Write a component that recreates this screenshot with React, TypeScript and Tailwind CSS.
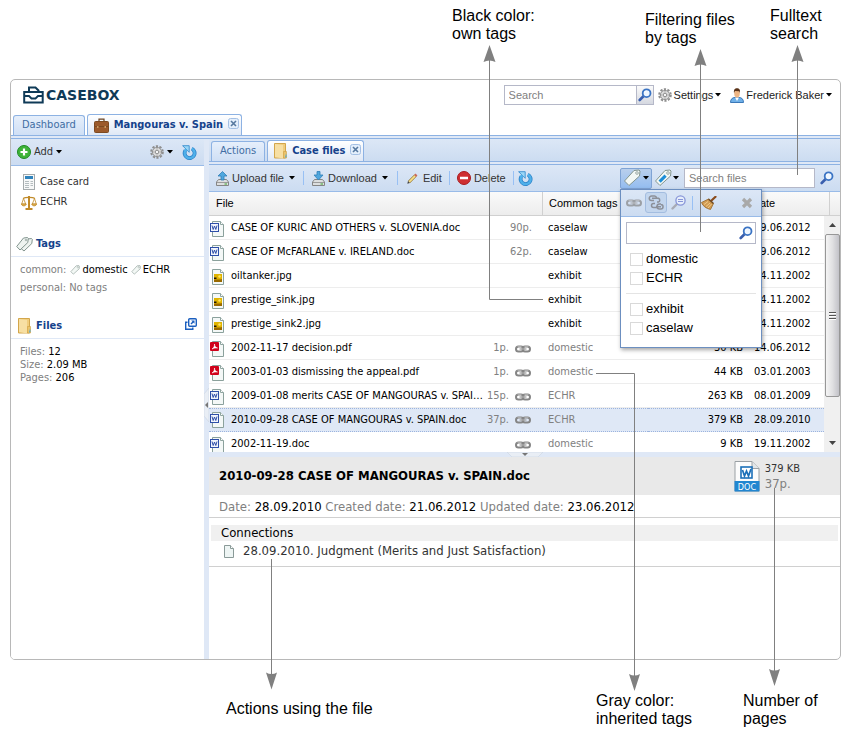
import type { ReactNode } from 'react';

const UI = "font-['DejaVu_Sans_Condensed','DejaVu_Sans',sans-serif]";
const SANS = "font-['Liberation_Sans',Arial,sans-serif]";

type IconProps = { className?: string };

function Caret() {
  return (
    <svg width="6" height="4" viewBox="0 0 6 4" className="shrink-0" aria-hidden="true">
      <path d="M0 0h6L3 3.500z" fill="#000" />
    </svg>
  );
}

function LogoMark() {
  return (
    <svg width="21" height="18" viewBox="0 0 21 18" fill="none" stroke="#0f3a57" aria-hidden="true">
      <path d="M6 5V1.500h6.500L15.500 4.500v1" strokeWidth="2" />
      <path d="M1.200 6h18.500v10.500H1.200z" strokeWidth="2" />
      <path d="M2 10h4l2.500 2.500h4L15 10h4" strokeWidth="1.800" />
    </svg>
  );
}

function Magnifier({ className = '' }: IconProps) {
  return (
    <svg width="14" height="14" viewBox="0 0 14 14" className={className} aria-hidden="true">
      <path d="M1.700 12l4-4" stroke="#3a5fae" strokeWidth="2.600" strokeLinecap="round" />
      <circle cx="8.600" cy="5.200" r="3.900" fill="#eef6ff" stroke="#3b74c4" strokeWidth="1.800" />
      <path d="M6.500 4.500a2.200 2.200 0 0 1 2-1.500" stroke="#fff" fill="none" />
    </svg>
  );
}

function Gear({ className = '' }: IconProps) {
  return (
    <svg width="14" height="14" viewBox="0 0 14 14" className={className} fill="none" aria-hidden="true">
      <circle cx="7" cy="7" r="5.800" stroke="#8f8f8f" strokeWidth="2" strokeDasharray="2.200 1.440" />
      <circle cx="7" cy="7" r="4.600" fill="#dcdcdc" stroke="#949494" />
      <circle cx="7" cy="7" r="1.800" fill="#f6f6f6" stroke="#8d8d8d" />
      <path d="M7 3v1.500M7 9.500V11M3 7h1.500M9.500 7H11" stroke="#aaa" />
    </svg>
  );
}

function Person() {
  return (
    <svg width="14" height="15" viewBox="0 0 14 15" aria-hidden="true">
      <path d="M.5 14.500c0-3.500 2-5 4.500-5h4c2.500 0 4.500 1.500 4.500 5z" fill="#6fb0e8" stroke="#3b78b8" />
      <path d="M5 9.500h4L7 13z" fill="#fff" />
      <ellipse cx="7" cy="5.500" rx="2.800" ry="4" fill="#eeb583" />
      <path d="M4 5C3.500 1.500 5 .3 7 .3S10.500 1.500 10 5L9.200 3.200 5 3z" fill="#5a3218" />
    </svg>
  );
}

function Refresh() {
  return (
    <svg width="15" height="15" viewBox="0 0 15 15" fill="none" aria-hidden="true">
      <path d="M9.800 3.600A5 5 0 1 1 3.400 5.400" stroke="#2a7fc6" strokeWidth="3.800" />
      <path d="M9.800 3.600A5 5 0 1 1 3.400 5.400" stroke="#4fb0ea" strokeWidth="2.400" />
      <path d="M.6.700h6.600v6.600z" fill="#9ad6f6" stroke="#3a8fd0" strokeWidth=".9" />
      <path d="M2.600 4.200l2 2" stroke="#4fb0ea" strokeWidth="2" />
    </svg>
  );
}

function PlusBadge() {
  return (
    <svg width="14" height="14" viewBox="0 0 14 14" aria-hidden="true">
      <circle cx="7" cy="7" r="6.500" fill="#3fb339" stroke="#1f8a22" />
      <path d="M7 3.500v7M3.500 7h7" stroke="#fff" strokeWidth="2.200" />
    </svg>
  );
}

function DeleteBadge() {
  return (
    <svg width="14" height="14" viewBox="0 0 14 14" aria-hidden="true">
      <circle cx="7" cy="7" r="6.500" fill="#cf2f31" stroke="#a81b1f" />
      <path d="M3 5.700h8v2.600H3z" fill="#fff" />
    </svg>
  );
}

function Briefcase() {
  return (
    <svg width="15" height="15" viewBox="0 0 15 15" aria-hidden="true">
      <path d="M5 4V1.200h5V4" fill="none" stroke="#6b4423" strokeWidth="1.200" />
      <rect x=".5" y="3.500" width="14" height="11" rx="1" fill="#9c5a2c" stroke="#7d4a22" />
      <path d="M1 8.500h13" stroke="#7d4a22" />
      <path d="M3 8h1.500v2H3zM10.500 8H12v2h-1.500z" fill="#c99a62" />
    </svg>
  );
}

function FolderIcon({ className = '' }: IconProps) {
  return (
    <svg width="13" height="16" viewBox="0 0 13 16" className={className} aria-hidden="true">
      <path d="M.5.500h11v14.500H.5z" fill="#f0cd7e" stroke="#d3a64b" />
      <path d="M1 1l8 1v13.500L1 14z" fill="#f7dfa3" />
      <path d="M9.500 8.500h3v6.500h-3z" fill="#eac36c" stroke="#cfa040" strokeWidth=".6" />
      <path d="M12 10.500l.6 3-1.600 1.500z" fill="#3fa7dc" />
    </svg>
  );
}

function Drive({ down = false }: { down?: boolean }) {
  return (
    <svg width="13" height="15" viewBox="0 0 13 15" aria-hidden="true">
      <path d="M2.500 8.500h8l2 2.500v3.500H.5V11z" fill="#dcdedf" stroke="#858585" />
      <path d="M1 11.500h11" stroke="#9b9b9b" />
      <path d="M8.500 13h2.500" stroke="#3ca52e" />
      {down ? (
        <path d="M5 .500h3v3.500h3L6.500 9 2 4h3z" fill="#4fa7de" stroke="#2e7fb8" strokeWidth=".8" />
      ) : (
        <path d="M5 9h3V5h3L6.500.500 2 5h3z" fill="#4fa7de" stroke="#2e7fb8" strokeWidth=".8" />
      )}
    </svg>
  );
}

function Pencil() {
  return (
    <svg width="11" height="11" viewBox="0 0 11 11" aria-hidden="true">
      <path d="M2 9L8.500 2.500" stroke="#8f6a1e" strokeWidth="3" />
      <path d="M2.200 8.800L8.500 2.500" stroke="#f7e08a" strokeWidth="1.800" />
      <path d="M8 3l1.500-1.500" stroke="#c96a5c" strokeWidth="2.600" />
      <path d="M.3 10.700l.7-2.600L2.900 10z" fill="#444" />
    </svg>
  );
}

function TagIcon({ size = 18, marked = false }: { size?: number; marked?: boolean }) {
  return (
    <svg width={size} height={size} viewBox="0 0 18 18" aria-hidden="true">
      <path d="M11 1.500l5-.5 1 1-.5 5L6 16.500 1.500 12z" fill="#f3f8f5" stroke="#83958f" strokeLinejoin="round" />
      {marked && <path d="M4.500 11.500l6-6 2.200 2.200L6.700 13.700z" fill="#1d8ed8" />}
      <circle cx="14" cy="4" r="1.300" fill="#fff" stroke="#83958f" strokeWidth=".8" />
    </svg>
  );
}

function TagsIcon() {
  return (
    <svg width="17" height="15" viewBox="0 0 17 15" fill="#eef3f0" stroke="#83958f" strokeLinejoin="round" aria-hidden="true">
      <path d="M11.500 2l4-.5.8.8-.5 4.200L8 14 4.500 11z" />
      <path d="M7.500 1l4-.5.8.8-.5 4.200L4 13 .7 9.500z" />
      <circle cx="10" cy="3" r=".8" fill="#fff" strokeWidth=".7" />
    </svg>
  );
}

function CardIcon() {
  return (
    <svg width="12" height="16" viewBox="0 0 12 16" aria-hidden="true">
      <rect x=".5" y=".5" width="11" height="15" fill="#f7f8f8" stroke="#a5abad" />
      <path d="M2 2h8v3H2z" fill="#2e83bd" />
      <path d="M2 7.500h4M2 9.500h4M2 11.500h4M2 13.500h4M7.500 7.500H10M7.500 9.500H10M7.500 11.500H10" stroke="#b4bcbf" />
    </svg>
  );
}

function Scales() {
  return (
    <svg width="16" height="15" viewBox="0 0 16 15" fill="none" stroke="#c08a2a" aria-hidden="true">
      <path d="M8 1v12M4.500 14h7" strokeWidth="2" />
      <path d="M2 3.500c2-1.500 10-1.500 12 0" strokeWidth="1.300" />
      <path d="M2.500 3.500L.7 9h4zM13.500 3.500L11.300 9h4z" strokeWidth=".8" />
      <path d="M.3 9h5c-.5 2.500-4.500 2.500-5 0zM10.700 9h5c-.5 2.500-4.500 2.500-5 0z" fill="#e3b455" strokeWidth=".8" />
    </svg>
  );
}

function PopOut() {
  return (
    <svg width="12" height="12" viewBox="0 0 12 12" fill="none" stroke="#1b5fbf" aria-hidden="true">
      <rect x="3.700" y=".7" width="7.600" height="7.600" rx="1" strokeWidth="1.400" />
      <path d="M2.500 4.200H.700v7.100h7.100V9.500" strokeWidth="1.400" />
      <path d="M6 6l2.500-2.500" strokeWidth="1.500" />
      <path d="M6.200 2.500h3.300v3.300z" fill="#1b5fbf" stroke="none" />
    </svg>
  );
}

function ChainIcon({ className = '' }: IconProps) {
  return (
    <svg width="16" height="8" viewBox="0 0 16 8" fill="none" className={className} aria-hidden="true">
      <rect x="1" y="1.500" width="7.500" height="5" rx="2.500" stroke="#858585" strokeWidth="2" />
      <rect x="7.500" y="1.500" width="7.500" height="5" rx="2.500" stroke="#858585" strokeWidth="2" />
      <path d="M4.500 4h7" stroke="#a8a8a8" strokeWidth="1.400" />
      <path d="M2.500 1.500h4M9.500 1.500h4" stroke="#c4c4c4" strokeWidth=".6" />
    </svg>
  );
}

function ChainSplit() {
  return (
    <svg width="16" height="15" viewBox="0 0 16 15" fill="none" stroke="#8c9099" strokeWidth="1.500" aria-hidden="true">
      <path d="M6 5.500H3.500a2.200 2.200 0 0 1 0-4.500h3a2.200 2.200 0 0 1 2.100 1.800M4 3.300h6.500a2 2 0 0 1 0 3.700H9" />
      <path d="M7 8.500H5.500a2 2 0 0 0 0 4h3M13 9h-1.500a2.500 2.500 0 0 0 0 5h1.300a2.200 2.200 0 0 0 0-4.500M8 11.700h5" />
    </svg>
  );
}

function MagnifierMinus() {
  return (
    <svg width="15" height="15" viewBox="0 0 15 15" fill="none" aria-hidden="true">
      <path d="M1.500 13.500l4.500-4.500" stroke="#a8abb5" strokeWidth="2.400" strokeLinecap="round" />
      <circle cx="9.500" cy="5.500" r="4.600" fill="#e6eefb" stroke="#8795d8" strokeWidth="1.300" />
      <path d="M7 4.500h5M7 6.500h5" stroke="#8795d8" />
    </svg>
  );
}

function Broom() {
  return (
    <svg width="16" height="14" viewBox="0 0 16 14" aria-hidden="true">
      <path d="M10 5L14.500.800" stroke="#8a4b1c" strokeWidth="2.200" strokeLinecap="round" />
      <path d="M.5 6.500L7.500 3 12.500 7.500 9.500 13.500C5.500 12.500 2 10.500.5 6.500z" fill="#d09a52" stroke="#9a6a2a" strokeWidth=".8" />
      <path d="M3 8.500l4-3M5 10.500l4-3.500M7 12l3.500-4" stroke="#f2cc88" />
      <path d="M7.500 3l5 4.500" stroke="#6c4a26" strokeWidth="1.400" />
    </svg>
  );
}

function TabClose() {
  return (
    <svg width="11" height="11" viewBox="0 0 11 11" aria-hidden="true">
      <rect x=".5" y=".5" width="10" height="10" rx="2" fill="#e3eefb" stroke="#a3bfe4" />
      <path d="M3 3l5 5M8 3L3 8" stroke="#56789f" strokeWidth="1.600" />
    </svg>
  );
}

type FileKind = 'doc' | 'jpg' | 'pdf';

function FileIcon({ kind }: { kind: FileKind }) {
  return (
    <svg width="14" height="16" viewBox="0 0 14 16" className="shrink-0" aria-hidden="true">
      <path d="M2.500.500h8l3 3v12h-11z" fill="#f4f8f7" stroke="#8ba19c" />
      <path d="M10.500.500v3h3" fill="#fff" stroke="#8fa5a0" />
      {kind === 'doc' && (
        <>
          <rect x=".5" y="2.500" width="8" height="8" fill="#f2f5fc" stroke="#2e4fa8" />
          <path d="M2 4.500l1.200 4L4.500 5l1.300 3.500L7 4.500" fill="none" stroke="#2e4fa8" />
        </>
      )}
      {kind === 'pdf' && (
        <>
          <rect y="1" width="9" height="9" rx="1" fill="#d0021b" />
          <path d="M2 8c2-1 2.500-3 2.500-5 0 2 1 3.500 3 4-2-.3-4 0-5.500 1z" fill="#fff" stroke="#fff" strokeWidth=".6" />
        </>
      )}
      {kind === 'jpg' && (
        <>
          <rect x="4" y="5" width="8" height="8" fill="#e0b400" />
          <path d="M4 11c2-1.500 3 .5 8-1v3H4z" fill="#9a6a00" />
          <path d="M4 8.500h2.500V10H4z" fill="#1f1400" />
          <circle cx="9.500" cy="7.500" r="1.200" fill="#ffe56a" />
        </>
      )}
    </svg>
  );
}

function DocBadge() {
  return (
    <svg width="26" height="31" viewBox="0 0 26 31" aria-hidden="true">
      <path d="M1 .500h17l7 7V30H1z" fill="#fcfcfc" stroke="#9aa0a4" />
      <path d="M18 .500v7h7" fill="#e3e6e8" stroke="#9aa0a4" />
      <path d="M.5 20h25v10.500H.5z" fill="#2286d0" />
      <rect x="7" y="6" width="11" height="11" fill="#fff" stroke="#1c70b8" strokeWidth="1.600" />
      <path d="M8.500 9l2 6 2-5 2 5 2.500-7" fill="none" stroke="#1c70b8" strokeWidth="1.700" />
      <text x="13" y="28.500" textAnchor="middle" fontSize="9" fill="#fff" fontFamily="DejaVu Sans Condensed, sans-serif">
        DOC
      </text>
    </svg>
  );
}

function Separator() {
  return <span className="block h-[14px] w-px shrink-0 bg-[#98c0f4]" />;
}

function Tab({ active = false, icon, children }: { active?: boolean; icon?: ReactNode; children: ReactNode }) {
  if (!active) {
    return (
      <button
        type="button"
        className="h-5 rounded-t-[3px] border border-b-0 border-[#8db2e3] bg-linear-to-b from-[#e6effb] to-[#cfdff5] px-2 text-[11px] text-[#416da3]"
      >
        {children}
      </button>
    );
  }
  return (
    <div className="flex h-[21px] items-center rounded-t-[3px] border border-b-0 border-[#8db2e3] bg-linear-to-b from-white to-[#dfe8f6] pr-[2px] pl-[6px] text-[11px] font-bold text-[#15428b]">
      <button type="button" className="flex items-center gap-[5px]">
        {icon}
        {children}
      </button>
      <button type="button" aria-label="Close tab" className="mb-1 ml-[5px]">
        <TabClose />
      </button>
    </div>
  );
}

function TagOption({ label }: { label: string }) {
  return (
    <label className="flex h-[19px] items-center gap-[3px] text-[13px] text-black">
      <input type="checkbox" className="size-[13px] appearance-none border border-[#d9d9d9] bg-white" />
      {label}
    </label>
  );
}

function TagFilterMenu() {
  return (
    <div className="absolute top-[21px] left-0 z-10 h-[159px] w-[142px] border border-[#6c8fc0] bg-white shadow-[1px_2px_4px_rgba(0,0,0,0.35)]">
      <div className="flex h-[27px] items-center border-b border-[#99bbe8] bg-linear-to-b from-[#dce7f6] to-[#ccdcf1] pl-[5px]">
        <button type="button" aria-label="Linked tags"><ChainIcon className="opacity-70" /></button>
        <button
          type="button"
          aria-label="Unlinked tags"
          className="ml-[3px] flex h-[21px] w-[22px] items-center justify-center rounded-[3px] border border-[#a3bde0] bg-[#c3d6ee]"
        >
          <ChainSplit />
        </button>
        <button type="button" aria-label="Collapse search" className="mr-[6px] ml-1"><MagnifierMinus /></button>
        <Separator />
        <button type="button" aria-label="Clear filter" className="ml-2"><Broom /></button>
        <button type="button" aria-label="Close" className="mr-2 ml-auto">
          <svg width="12" height="12" viewBox="0 0 12 12" aria-hidden="true">
            <path d="M2 2l8 8M10 2l-8 8" stroke="#a9a9a9" strokeWidth="3.200" />
          </svg>
        </button>
      </div>
      <div className="mx-[5px] mt-[5px] flex h-[22px] items-center border border-[#b5b8c8] bg-white pr-[2px]">
        <input aria-label="Search tags" className="min-w-0 flex-1 text-[13px] outline-none" />
        <Magnifier />
      </div>
      <div className="mx-[5px] mt-[6px] border-b border-[#e4e4e4] pb-[5px] pl-1">
        <TagOption label="domestic" />
        <TagOption label="ECHR" />
      </div>
      <div className="mx-[5px] mt-[6px] pl-1">
        <TagOption label="exhibit" />
        <TagOption label="caselaw" />
      </div>
    </div>
  );
}

type FileRow = {
  name: string;
  kind: FileKind;
  pages?: string;
  linked?: boolean;
  tag: string;
  own?: boolean;
  size?: string;
  date: string;
  selected?: boolean;
};

const FILES: FileRow[] = [
  { name: 'CASE OF KURIC AND OTHERS v. SLOVENIA.doc', kind: 'doc', pages: '90p.', tag: 'caselaw', own: true, date: '19.06.2012' },
  { name: 'CASE OF McFARLANE v. IRELAND.doc', kind: 'doc', pages: '62p.', tag: 'caselaw', own: true, date: '19.06.2012' },
  { name: 'oiltanker.jpg', kind: 'jpg', tag: 'exhibit', own: true, date: '14.11.2002' },
  { name: 'prestige_sink.jpg', kind: 'jpg', tag: 'exhibit', own: true, date: '14.11.2002' },
  { name: 'prestige_sink2.jpg', kind: 'jpg', tag: 'exhibit', own: true, date: '14.11.2002' },
  { name: '2002-11-17 decision.pdf', kind: 'pdf', pages: '1p.', linked: true, tag: 'domestic', size: '30 KB', date: '14.06.2012' },
  { name: '2003-01-03 dismissing the appeal.pdf', kind: 'pdf', pages: '1p.', linked: true, tag: 'domestic', size: '44 KB', date: '03.01.2003' },
  { name: '2009-01-08 merits CASE OF MANGOURAS v. SPAIN.doc', kind: 'doc', pages: '15p.', linked: true, tag: 'ECHR', size: '263 KB', date: '08.01.2009' },
  { name: '2010-09-28 CASE OF MANGOURAS v. SPAIN.doc', kind: 'doc', pages: '37p.', linked: true, tag: 'ECHR', size: '379 KB', date: '28.09.2010', selected: true },
  { name: '2002-11-19.doc', kind: 'doc', linked: true, tag: 'domestic', size: '9 KB', date: '19.11.2002' },
];

function FileTable() {
  return (
    <div className="relative h-[260px] overflow-hidden">
      <table className="w-full table-fixed border-separate border-spacing-0 text-[11px] text-black">
        <colgroup>
          <col />
          <col className="w-[105px]" />
          <col className="w-[100px]" />
          <col className="w-[82px]" />
          <col className="w-[10px]" />
        </colgroup>
        <thead className={SANS}>
          <tr className="h-6 bg-linear-to-b from-[#fafafa] to-[#ececec] text-left">
            <th className="border-r border-b border-[#d0d0d0] pl-[7px] font-normal">File</th>
            <th className="border-b border-[#d0d0d0] pl-[6px] font-normal whitespace-nowrap">Common tags</th>
            <th className="border-r border-b border-[#d0d0d0]" />
            <th className="border-r border-b border-[#d0d0d0] pl-1 font-normal">Date</th>
            <th className="border-b border-[#d0d0d0]" />
          </tr>
        </thead>
        <tbody>
          {FILES.map((f) => {
            const line = f.selected
              ? 'border-y border-dotted border-[#9cb4de] bg-[#dfe8f6] pt-0'
              : 'border-b border-[#ededed] pt-[2px]';
            return (
              <tr key={f.name} className="h-6">
                <td className={`${line} pb-0 pr-[11px] pl-px`}>
                  <div className="flex items-center">
                    <FileIcon kind={f.kind} />
                    <span className="ml-[7px] min-w-0 flex-1 truncate">{f.name}</span>
                    {f.pages && <span className="ml-[3px] text-[#808080]">{f.pages}</span>}
                    {f.linked && <ChainIcon className="mr-px ml-[6px] shrink-0" />}
                  </div>
                </td>
                <td className={`${line} pr-0 pb-0 pl-[5px] ${f.own ? 'text-black' : 'text-[#808080]'}`}>{f.tag}</td>
                <td className={`${line} pr-[5px] pb-0 pl-0 text-right`}>{f.size}</td>
                <td className={`${line} pr-0 pb-0 pl-[6px]`}>{f.date}</td>
                <td className="p-0" />
              </tr>
            );
          })}
        </tbody>
      </table>
      <div className="absolute top-6 right-0 bottom-0 flex w-4 flex-col items-center bg-[#f0f0f0]">
        <div className="flex h-[18px] items-center">
          <svg width="7" height="4" viewBox="0 0 7 4" aria-hidden="true"><path d="M0 4h7L3.500 0z" fill="#444" /></svg>
        </div>
        <div className="flex h-[163px] w-[15px] items-center justify-center rounded-[2px] border border-[#979797] bg-linear-to-r from-[#f5f5f5] via-[#e0e0e2] to-[#c2c2c8]">
          <svg width="7" height="8" viewBox="0 0 7 8" aria-hidden="true">
            <path d="M0 .500h7M0 3.500h7M0 6.500h7" stroke="#555" />
            <path d="M0 1.500h7M0 4.500h7M0 7.500h7" stroke="#fff" />
          </svg>
        </div>
        <div className="mt-auto flex h-[18px] items-center">
          <svg width="7" height="4" viewBox="0 0 7 4" aria-hidden="true"><path d="M0 0h7L3.500 4z" fill="#444" /></svg>
        </div>
      </div>
    </div>
  );
}

function SidePanel() {
  return (
    <aside className="flex w-[193px] shrink-0 flex-col bg-white text-[11px] text-[#333]">
      <div className="flex h-[27px] items-center border-b border-[#99bbe8] bg-linear-to-b from-[#dce7f6] to-[#ccdcf1] pr-[7px] pl-[6px]">
        <button type="button" className="flex items-center gap-[3px]">
          <PlusBadge />
          <span>Add</span>
          <Caret />
        </button>
        <button type="button" aria-label="Options" className="ml-auto flex items-center gap-[3px]">
          <Gear />
          <Caret />
        </button>
        <button type="button" aria-label="Refresh" className="ml-[9px]"><Refresh /></button>
      </div>
      <nav className="flex flex-col pt-[6px]">
        <a href="#card" className="flex h-5 items-center gap-[5px] pl-3"><CardIcon />Case card</a>
        <a href="#echr" className="flex h-5 items-center gap-[3px] pl-[10px]"><Scales />ECHR</a>
      </nav>
      <div className="mt-5 flex h-[25px] items-center gap-[3px] border-b border-[#dfe8f6] pl-[5px] text-[11px] font-bold text-[#15428b]">
        <TagsIcon />
        <h2>Tags</h2>
      </div>
      <div className="mt-1 flex flex-col pl-[9px] text-[#808080]">
        <p className="flex h-[18px] items-center">
          common:
          <span className="ml-1 flex items-center gap-[2px] text-black"><TagIcon size={10} />domestic</span>
          <span className="ml-[3px] flex items-center gap-[2px] text-black"><TagIcon size={10} />ECHR</span>
        </p>
        <p className="h-[18px] leading-[18px]">personal: No tags</p>
      </div>
      <div className="mt-[17px] flex h-[25px] items-center gap-[5px] border-b border-[#dfe8f6] pr-[7px] pl-[7px] text-[11px] font-bold text-[#15428b]">
        <FolderIcon />
        <h2>Files</h2>
        <button type="button" aria-label="Open files" className="mb-1 ml-auto"><PopOut /></button>
      </div>
      <div className="mt-[6px] pl-[9px] leading-[13px] text-[#808080]">
        <p>Files: <span className="text-black">12</span></p>
        <p>Size: <span className="text-black">2.09 MB</span></p>
        <p>Pages: <span className="text-black">206</span></p>
      </div>
    </aside>
  );
}

function FileToolbar() {
  return (
    <div className={`${SANS} flex h-[27px] items-center border-b border-[#99bbe8] bg-linear-to-b from-[#dce7f6] to-[#ccdcf1] pr-[6px] pl-[7px] text-[11px] text-[#333]`}>
      <button type="button" className="flex items-center gap-[3px]"><Drive />Upload file<span className="ml-[2px]"><Caret /></span></button>
      <span className="mx-[8px]"><Separator /></span>
      <button type="button" className="flex items-center gap-[3px]"><Drive down />Download<span className="ml-[2px]"><Caret /></span></button>
      <span className="mx-[9px]"><Separator /></span>
      <button type="button" className="flex items-center gap-[5px]"><Pencil />Edit</button>
      <span className="mx-[7px]"><Separator /></span>
      <button type="button" className="flex items-center gap-[3px]"><DeleteBadge />Delete</button>
      <span className="mr-1 ml-[7px]"><Separator /></span>
      <button type="button" aria-label="Refresh"><Refresh /></button>
      <div className="relative ml-auto">
        <button
          type="button"
          aria-label="Filter by tags"
          className="flex h-[21px] w-8 items-center justify-center gap-[2px] rounded-[2px] border border-[#7fa3d4] bg-linear-to-b from-[#b9cfec] to-[#94bdf0]"
        >
          <TagIcon />
          <Caret />
        </button>
        <TagFilterMenu />
      </div>
      <button type="button" aria-label="Edit tags" className="mr-[5px] ml-[2px] flex items-center gap-[1px]">
        <TagIcon marked />
        <Caret />
      </button>
      <input
        aria-label="Search files"
        placeholder="Search files"
        className="h-[20px] w-[131px] border border-[#b5b8c8] bg-white px-1 text-[11px] placeholder:text-[#808080]"
      />
      <button type="button" aria-label="Find" className="ml-[5px]"><Magnifier /></button>
    </div>
  );
}

function Details() {
  return (
    <section className="text-[13px] text-black">
      <div className="flex h-[38px] items-center bg-[#e9e9e9] pr-10 pl-[10px]">
        <h1 className="flex-1 font-bold">2010-09-28 CASE OF MANGOURAS v. SPAIN.doc</h1>
        <DocBadge />
        <div className="ml-[5px] leading-[15px]">
          <p className="text-[11px] text-[#333]">379 KB</p>
          <p className="text-[#808080]">37p.</p>
        </div>
      </div>
      <p className="h-[23px] border-b border-[#d0d0d0] pl-[10px] leading-[23px] text-[#808080]">
        Date: <span className="text-black">28.09.2010</span> Created date: <span className="text-black">21.06.2012</span>{' '}
        Updated date: <span className="text-black">23.06.2012</span>
      </p>
      <h2 className="mx-[2px] mt-[7px] h-4 bg-[#f0f0f0] pl-[10px] leading-4">Connections</h2>
      <div className="flex h-[26px] border-b border-[#d0d0d0] pt-[2px] pl-[15px] text-[#333]">
        <a href="#judgment" className="flex h-4 items-center gap-[9px]">
          <svg width="10" height="13" viewBox="0 0 10 13" aria-hidden="true">
            <path d="M.5.500h6l3 3v9h-9z" fill="#eef5f4" stroke="#8a9a98" />
            <path d="M6.500.500v3h3" fill="#fff" stroke="#8a9a98" />
          </svg>
          28.09.2010. Judgment (Merits and Just Satisfaction)
        </a>
      </div>
    </section>
  );
}

function CaseBoxWindow() {
  return (
    <main className={`${UI} mr-[14px] ml-[10px] flex h-[581px] flex-col overflow-hidden rounded-[5px] border border-[#b8b8b8] bg-white`}>
      <header className="flex h-[34px] shrink-0 items-center pr-2 pb-1 pl-3 text-[11px] text-[#222]">
        <a href="#home" className="flex items-center gap-[2px] font-['DejaVu_Sans',sans-serif] text-[14px] font-bold text-[#0f3a57]">
          <LogoMark />
          CASEBOX
        </a>
        <div className={`${SANS} ml-auto flex items-center`}>
          <input
            aria-label="Search"
            placeholder="Search"
            className="h-[20px] w-[133px] border border-[#b5b8c8] bg-white px-1 placeholder:text-[#808080]"
          />
          <button type="button" aria-label="Search" className="flex h-[20px] w-[17px] items-center justify-center border border-l-0 border-[#b5b8c8] bg-linear-to-b from-[#fbfbfb] to-[#d5d8e0]">
            <Magnifier />
          </button>
          <button type="button" className="ml-1 flex items-center gap-[2px]"><Gear />Settings<Caret /></button>
          <button type="button" className="ml-[9px] flex items-center gap-[2px]"><Person />Frederick Baker<Caret /></button>
        </div>
      </header>
      <div className="flex h-[21px] shrink-0 items-end gap-[2px] pl-[2px]">
        <Tab>Dashboard</Tab>
        <Tab active icon={<Briefcase />}>Mangouras v. Spain</Tab>
      </div>
      <div className="h-1 shrink-0 border-y border-[#8db2e3] bg-[#dfe8f6]" />
      <div className="flex min-h-0 flex-1">
        <SidePanel />
        <div className="flex w-[5px] shrink-0 items-center bg-[#dfe8f6]">
          <svg width="5" height="34" viewBox="0 0 5 34" className="mt-[12px]" aria-hidden="true">
            <path d="M5 0L0 6v22l5 6z" fill="#e9eef5" stroke="#cbd5e3" strokeWidth=".6" />
            <path d="M4 14v6L1 17z" fill="#777" />
          </svg>
        </div>
        <div className="flex min-w-0 flex-1 flex-col">
          <div className="flex h-[22px] shrink-0 items-end gap-[2px] bg-linear-to-b from-[#dce7f6] to-[#ccdcf1] pl-[2px]">
            <Tab>Actions</Tab>
            <Tab active icon={<FolderIcon />}>Case files</Tab>
          </div>
          <div className="h-1 shrink-0 border-y border-[#8db2e3] bg-[#dfe8f6]" />
          <FileToolbar />
          <FileTable />
          <div className="flex h-[5px] shrink-0 justify-center bg-[#dfe8f6]">
            <svg width="36" height="5" viewBox="0 0 36 5" aria-hidden="true">
              <path d="M0 0h36l-5 5H5z" fill="#e9eef5" stroke="#cbd5e3" strokeWidth=".6" />
              <path d="M15 1h6l-3 3z" fill="#777" />
            </svg>
          </div>
          <Details />
        </div>
      </div>
    </main>
  );
}

function CalloutLines() {
  return (
    <svg width="855" height="737" viewBox="0 0 855 737" fill="none" className="pointer-events-none absolute top-0 left-0 z-20" aria-hidden="true">
      <g stroke="#808080">
        <path d="M489.500 60V299.500H543" />
        <path d="M700.500 64V232" />
        <path d="M797.500 60V175" />
        <path d="M271.500 559V675" />
        <path d="M596 373.500H634.500V677" />
        <path d="M774.500 488V672" />
      </g>
      <g fill="#808080">
        <path d="M489.500 45l6 17q-6-3-12 0z" />
        <path d="M700.500 49l6 17q-6-3-12 0z" />
        <path d="M797.500 45l6 17q-6-3-12 0z" />
        <path d="M271.500 689.500l5.500-17q-5.500 3-11 0z" />
        <path d="M634.500 691l5.500-17q-5.500 3-11 0z" />
        <path d="M774.500 686l5.500-17q-5.500 3-11 0z" />
      </g>
    </svg>
  );
}

export default function App() {
  return (
    <div className="relative bg-white">
      <div className={`${SANS} flex h-[79px] pt-[7px] pl-[452px] text-[16px] leading-[18px] text-black`}>
        <p className="w-[193px]">Black color:<br />own tags</p>
        <p className="mt-1 w-[125px]">Filtering files<br />by tags</p>
        <p>Fulltext<br />search</p>
      </div>
      <CaseBoxWindow />
      <div className={`${SANS} flex h-[77px] items-start pt-8 pl-[226px] text-[16px] leading-[18px] text-black`}>
        <p className="mt-2 w-[370px]">Actions using the file</p>
        <p className="w-[147px]">Gray color:<br />inherited tags</p>
        <p>Number of<br />pages</p>
      </div>
      <CalloutLines />
    </div>
  );
}
